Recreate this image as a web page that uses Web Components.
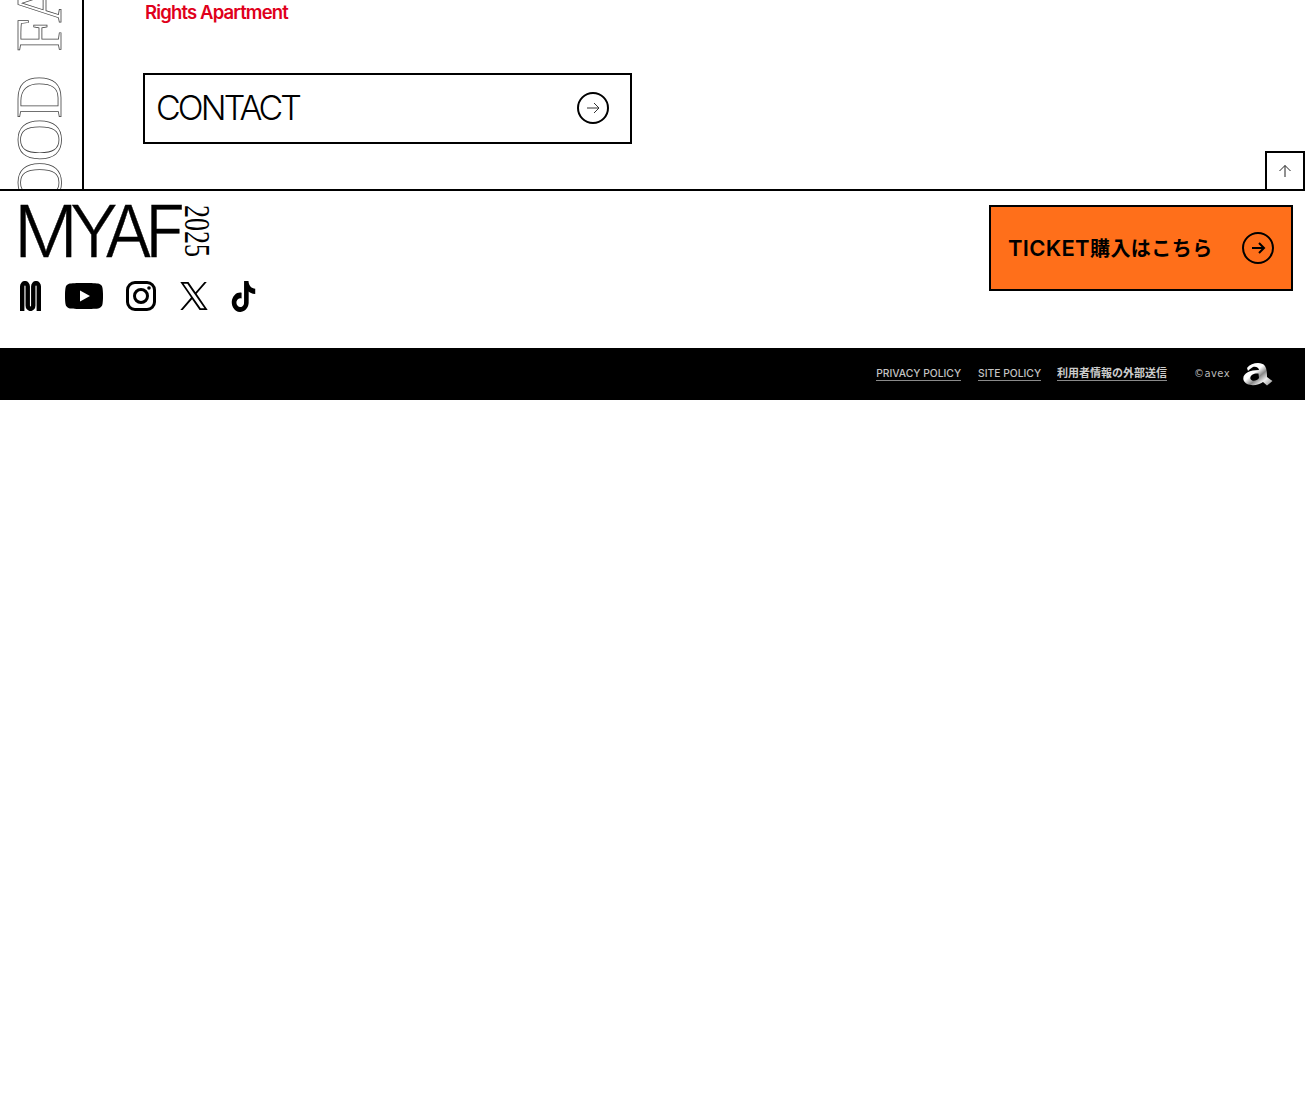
<!DOCTYPE html>
<html lang="ja">
<head>
<meta charset="utf-8">
<title>MYAF 2025</title>
<style>
    html, body { margin: 0; background: #fff; }
    body { font-family: "Inter", "Noto Sans CJK JP", sans-serif; color: #000; }
</style>
</head>
<body>
<top-section>
    <vertical-title slot="side">FOOD FAIR</vertical-title>
    <rights-note>Rights Apartment</rights-note>
    <link-button>CONTACT</link-button>
</top-section>
<site-footer></site-footer>
<footer-bar></footer-bar>

<script>
class TopSection extends HTMLElement {
    constructor() {
        super();
        this.attachShadow({ mode: "open" }).innerHTML = `
<style>
    :host { display: flex; position: relative; height: 189px; border-bottom: 2px solid #000; }
    #side { width: 82px; border-right: 2px solid #000; flex: none; overflow: hidden; }
    #main { padding-left: 59px; flex: 1; }
    #up {
        position: absolute; right: 0; bottom: -2px; width: 40px; height: 40px;
        box-sizing: border-box; border: 2px solid #000; background: #fff;
        display: flex; align-items: center; justify-content: center;
    }
</style>
<div id="side"><slot name="side"></slot></div>
<div id="main"><slot></slot></div>
<div id="up">
    <svg width="14" height="14" viewBox="0 0 14 14" fill="none" stroke="#222" stroke-width="1">
        <path d="M7 13V1.5M1.5 7L7 1.5L12.5 7"/>
    </svg>
</div>`;
    }
}
customElements.define("top-section", TopSection);

class VerticalTitle extends HTMLElement {
    constructor() {
        super();
        this.attachShadow({ mode: "open" }).innerHTML = `
<style>
    :host { display: block; height: 189px; }
    span {
        display: block; writing-mode: vertical-rl; white-space: nowrap;
        width: 80px; height: 300px; margin-top: -51px;
        font: 400 64.5px/80px "Liberation Serif", serif; word-spacing: 10px;
        color: #fff; -webkit-text-stroke: .8px #444;
        transform: rotate(180deg) scaleY(.92);
    }
</style>
<span><slot></slot></span>`;
    }
}
customElements.define("vertical-title", VerticalTitle);

class RightsNote extends HTMLElement {
    constructor() {
        super();
        this.attachShadow({ mode: "open" }).innerHTML = `
<style>
    :host {
        display: block; height: 73px; padding: 0 0 0 2px; box-sizing: border-box;
        font: 600 18.5px/24px "Inter", sans-serif; letter-spacing: -.85px; color: #e0001b;
    }
</style>
<slot></slot>`;
    }
}
customElements.define("rights-note", RightsNote);

class LinkButton extends HTMLElement {
    constructor() {
        super();
        this.attachShadow({ mode: "open" }).innerHTML = `
<style>
    :host {
        display: flex; align-items: center; justify-content: space-between;
        width: 489px; height: 71px; box-sizing: border-box;
        border: 2px solid #000; padding: 0 21px 0 11px;
        font: 300 34px/40px "Inter", sans-serif; letter-spacing: -2.9px;
    }
    span { position: relative; top: -1px; }
    svg { position: relative; top: -1px; }
</style>
<span><slot></slot></span>
<svg width="32" height="32" viewBox="0 0 32 32" fill="none" stroke="#000">
    <circle cx="16" cy="16" r="15" stroke-width="2"/>
    <path d="M10 16H22M17 11L22 16L17 21" stroke="#333" stroke-width="1"/>
</svg>`;
    }
}
customElements.define("link-button", LinkButton);

class SocialLinks extends HTMLElement {
    constructor() {
        super();
        this.attachShadow({ mode: "open" }).innerHTML = `
<style>
    :host { display: flex; align-items: center; height: 32px; }
    svg { display: block; flex: none; }
</style>
<svg width="21" height="30" viewBox="0 0 22 30" preserveAspectRatio="none" fill="none" stroke="#000" stroke-width="4.6" style="margin-right:24px">
    <path d="M2.3 30V5.5a2.9 3.3 0 0 1 5.8 0V24.5a2.9 3.3 0 0 0 5.8 0V5.5a2.9 3.3 0 0 1 5.8 0V30"/>
</svg>
<svg width="38" height="26" viewBox="0 0 38 26" style="margin-right:23px">
    <path d="M19 0C26 0 32 .2 34 .8C36 1.4 37.2 3 37.5 5C38.2 9 38.2 17 37.5 21C37.2 23 36 24.6 34 25.2C32 25.8 26 26 19 26C12 26 6 25.8 4 25.2C2 24.6 .8 23 .5 21C-.2 17 -.2 9 .5 5C.8 3 2 1.4 4 .8C6 .2 12 0 19 0Z"/>
    <path d="M15 7.5L25 13L15 18.5Z" fill="#fff"/>
</svg>
<svg width="30" height="30" viewBox="0 0 30 30" fill="none" stroke="#000" stroke-width="3" style="margin-right:24px">
    <rect x="1.5" y="1.5" width="27" height="27" rx="7.5"/>
    <circle cx="15" cy="15" r="6.5"/>
    <circle cx="23" cy="7" r="1.8" fill="#000" stroke="none"/>
</svg>
<svg width="28" height="28" viewBox="0 0 24 24" style="margin-right:22px">
    <path d="M14.234 10.162 22.977 0h-2.072l-7.591 8.824L7.251 0H.258l9.168 13.343L.258 24H2.33l8.016-9.318L16.749 24h6.993zm-2.837 3.299-.929-1.329L3.076 1.56h3.182l5.965 8.532.929 1.329 7.754 11.09h-3.182z"/>
</svg>
<svg width="27" height="31" viewBox="0 0 24 24" preserveAspectRatio="none">
    <path d="M12.525.02c1.31-.02 2.61-.01 3.91-.02.08 1.53.63 3.09 1.75 4.17 1.12 1.11 2.7 1.62 4.24 1.79v4.03c-1.44-.05-2.89-.35-4.2-.97-.57-.26-1.1-.59-1.62-.93-.01 2.92.01 5.84-.02 8.75-.08 1.4-.54 2.79-1.35 3.94-1.31 1.92-3.58 3.17-5.91 3.21-1.43.08-2.86-.31-4.08-1.03-2.02-1.19-3.44-3.37-3.65-5.71-.02-.5-.03-1-.01-1.49.18-1.9 1.12-3.72 2.58-4.96 1.66-1.44 3.98-2.13 6.15-1.72.02 1.48-.04 2.96-.04 4.44-.99-.32-2.15-.23-3.02.37-.63.41-1.11 1.04-1.36 1.75-.21.51-.15 1.07-.14 1.61.24 1.64 1.82 3.02 3.5 2.87 1.12-.01 2.19-.66 2.77-1.61.19-.33.4-.67.41-1.06.1-1.79.06-3.57.07-5.36.01-4.03-.01-8.05.02-12.07z"/>
</svg>`;
    }
}
customElements.define("social-links", SocialLinks);

class SiteFooter extends HTMLElement {
    constructor() {
        super();
        this.attachShadow({ mode: "open" }).innerHTML = `
<style>
    :host {
        display: flex; justify-content: space-between; align-items: flex-start;
        height: 157px; box-sizing: border-box; padding: 14px 12px 0 20px;
    }
    #logo { display: flex; height: 52px; align-items: flex-start; margin-bottom: 23px; }
    #name {
        font: 300 71px/52px "Inter", sans-serif; letter-spacing: -7.7px; width: 164px;
        white-space: nowrap; text-indent: -6px; -webkit-text-stroke: .4px #000;
    }
    #year { width: 26px; height: 52px; }
    #year span {
        display: block; writing-mode: vertical-rl; white-space: nowrap;
        font: 400 36px/26px "Liberation Serif", serif; height: 72px;
        transform: scaleY(.72); transform-origin: 0 0;
    }
    #ticket {
        width: 304px; height: 86px; box-sizing: border-box; border: 2px solid #000;
        background: #ff6f1a; display: flex; align-items: center; justify-content: space-between;
        padding: 0 17px 0 17px;
        font: 600 22px/28px "Inter", "Noto Sans CJK JP", sans-serif; letter-spacing: .3px;
    }
    #ticket b { font-size: 20px; font-weight: 600; letter-spacing: .45px; }
    svg { display: block; }
</style>
<div>
    <div id="logo">
        <div id="name">MYAF</div>
        <div id="year"><span>2025</span></div>
    </div>
    <social-links></social-links>
</div>
<div id="ticket">
    <span>TICKET<b>購入はこちら</b></span>
    <svg width="32" height="32" viewBox="0 0 32 32" fill="none" stroke="#000" stroke-width="2">
        <circle cx="16" cy="16" r="15"/>
        <path d="M10 16H22M17 11L22 16L17 21"/>
    </svg>
</div>`;
    }
}
customElements.define("site-footer", SiteFooter);

class FooterBar extends HTMLElement {
    constructor() {
        super();
        this.attachShadow({ mode: "open" }).innerHTML = `
<style>
    :host {
        display: flex; justify-content: flex-end; align-items: center; height: 52px;
        background: #000; color: #c4c4c4; padding-right: 32px; box-sizing: border-box;
        font: 500 10.3px/14px "Inter", "Noto Sans CJK JP", sans-serif;
    }
    a { color: inherit; text-decoration: none; border-bottom: 1px solid #8a8a8a; margin-right: 17px; white-space: nowrap; position: relative; top: -1px; }
    .jp { margin-right: 0; font-size: 11px; font-weight: 700; color: #ccc; }
    small { font: 400 10px/14px "DejaVu Sans", sans-serif; margin: 0 13px 0 27px; letter-spacing: .4px; color: #bbb; }
    svg { display: block; }
</style>
<a>PRIVACY POLICY</a>
<a style="margin-right:16px">SITE POLICY</a>
<a class="jp">利用者情報の外部送信</a>
<small>©avex</small>
<svg width="30" height="24" viewBox="0 0 30 24">
    <defs>
        <linearGradient id="g" x1="0" y1="0" x2="1" y2=".9">
            <stop offset="0" stop-color="#fff"/>
            <stop offset=".42" stop-color="#fff"/>
            <stop offset=".6" stop-color="#888"/>
            <stop offset=".78" stop-color="#eee"/>
            <stop offset="1" stop-color="#999"/>
        </linearGradient>
    </defs>
    <path fill-rule="evenodd" fill="url(#g)" d="M4 6C8 1 18 -1 22 4C24 7 24 12 24 15L29.5 19L24 23.5L20 20C15 24 3 25 .5 18C-1 12 6 8 16 8C16 6 13 4 10 5C8 6 6 8 5 9ZM15.5 11.5C10 11 6.5 14 7.5 17C9 20 14 19 16 16Z"/>
</svg>`;
    }
}
customElements.define("footer-bar", FooterBar);
</script>
</body>
</html>
